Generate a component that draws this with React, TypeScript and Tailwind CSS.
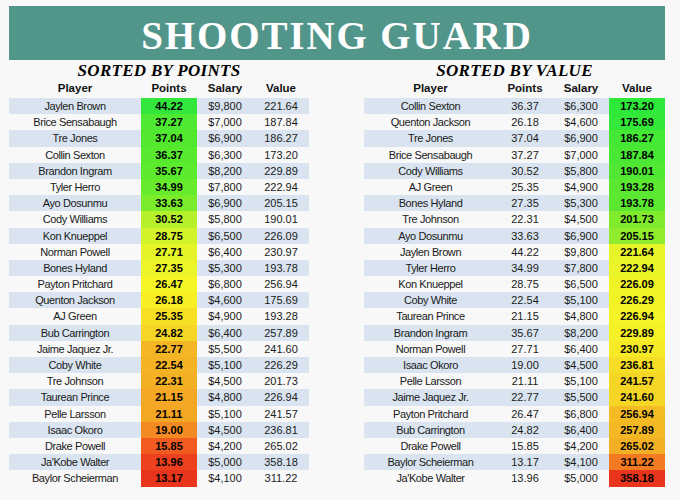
import React from 'react';

type Row = { name: string; points: string; salary: string; value: string; hl: string };

// Sorted by points: the points column carries the colour scale
const byPoints: Row[] = [
  { name: 'Jaylen Brown', points: '44.22', salary: '$9,800', value: '221.64', hl: 'bg-[#33e63c]' },
  { name: 'Brice Sensabaugh', points: '37.27', salary: '$7,000', value: '187.84', hl: 'bg-[#4fe832]' },
  { name: 'Tre Jones', points: '37.04', salary: '$6,900', value: '186.27', hl: 'bg-[#52e830]' },
  { name: 'Collin Sexton', points: '36.37', salary: '$6,300', value: '173.20', hl: 'bg-[#56e92e]' },
  { name: 'Brandon Ingram', points: '35.67', salary: '$8,200', value: '229.89', hl: 'bg-[#5cea2d]' },
  { name: 'Tyler Herro', points: '34.99', salary: '$7,800', value: '222.94', hl: 'bg-[#68eb2c]' },
  { name: 'Ayo Dosunmu', points: '33.63', salary: '$6,900', value: '205.15', hl: 'bg-[#7aec2c]' },
  { name: 'Cody Williams', points: '30.52', salary: '$5,800', value: '190.01', hl: 'bg-[#b6f02a]' },
  { name: 'Kon Knueppel', points: '28.75', salary: '$6,500', value: '226.09', hl: 'bg-[#d4f22a]' },
  { name: 'Norman Powell', points: '27.71', salary: '$6,400', value: '230.97', hl: 'bg-[#e4f428]' },
  { name: 'Bones Hyland', points: '27.35', salary: '$5,300', value: '193.78', hl: 'bg-[#ecf528]' },
  { name: 'Payton Pritchard', points: '26.47', salary: '$6,800', value: '256.94', hl: 'bg-[#f6f526]' },
  { name: 'Quenton Jackson', points: '26.18', salary: '$4,600', value: '175.69', hl: 'bg-[#f8ee24]' },
  { name: 'AJ Green', points: '25.35', salary: '$4,900', value: '193.28', hl: 'bg-[#f7e024]' },
  { name: 'Bub Carrington', points: '24.82', salary: '$6,400', value: '257.89', hl: 'bg-[#f5d525]' },
  { name: 'Jaime Jaquez Jr.', points: '22.77', salary: '$5,500', value: '241.60', hl: 'bg-[#f4b625]' },
  { name: 'Coby White', points: '22.54', salary: '$5,100', value: '226.29', hl: 'bg-[#f4b325]' },
  { name: 'Tre Johnson', points: '22.31', salary: '$4,500', value: '201.73', hl: 'bg-[#f4b025]' },
  { name: 'Taurean Prince', points: '21.15', salary: '$4,800', value: '226.94', hl: 'bg-[#f4a825]' },
  { name: 'Pelle Larsson', points: '21.11', salary: '$5,100', value: '241.57', hl: 'bg-[#f4a725]' },
  { name: 'Isaac Okoro', points: '19.00', salary: '$4,500', value: '236.81', hl: 'bg-[#f48a22]' },
  { name: 'Drake Powell', points: '15.85', salary: '$4,200', value: '265.02', hl: 'bg-[#f15b20]' },
  { name: "Ja'Kobe Walter", points: '13.96', salary: '$5,000', value: '358.18', hl: 'bg-[#ec401e]' },
  { name: 'Baylor Scheierman', points: '13.17', salary: '$4,100', value: '311.22', hl: 'bg-[#e9351c]' },
];

// Sorted by value: the value column carries the colour scale
const byValue: Row[] = [
  { name: 'Collin Sexton', points: '36.37', salary: '$6,300', value: '173.20', hl: 'bg-[#2ee83a]' },
  { name: 'Quenton Jackson', points: '26.18', salary: '$4,600', value: '175.69', hl: 'bg-[#33e838]' },
  { name: 'Tre Jones', points: '37.04', salary: '$6,900', value: '186.27', hl: 'bg-[#45e834]' },
  { name: 'Brice Sensabaugh', points: '37.27', salary: '$7,000', value: '187.84', hl: 'bg-[#48e834]' },
  { name: 'Cody Williams', points: '30.52', salary: '$5,800', value: '190.01', hl: 'bg-[#50e832]' },
  { name: 'AJ Green', points: '25.35', salary: '$4,900', value: '193.28', hl: 'bg-[#5ae830]' },
  { name: 'Bones Hyland', points: '27.35', salary: '$5,300', value: '193.78', hl: 'bg-[#5ce830]' },
  { name: 'Tre Johnson', points: '22.31', salary: '$4,500', value: '201.73', hl: 'bg-[#80ea2c]' },
  { name: 'Ayo Dosunmu', points: '33.63', salary: '$6,900', value: '205.15', hl: 'bg-[#90ec2c]' },
  { name: 'Jaylen Brown', points: '44.22', salary: '$9,800', value: '221.64', hl: 'bg-[#e6f428]' },
  { name: 'Tyler Herro', points: '34.99', salary: '$7,800', value: '222.94', hl: 'bg-[#eaf428]' },
  { name: 'Kon Knueppel', points: '28.75', salary: '$6,500', value: '226.09', hl: 'bg-[#f0f426]' },
  { name: 'Coby White', points: '22.54', salary: '$5,100', value: '226.29', hl: 'bg-[#f2f426]' },
  { name: 'Taurean Prince', points: '21.15', salary: '$4,800', value: '226.94', hl: 'bg-[#f4f426]' },
  { name: 'Brandon Ingram', points: '35.67', salary: '$8,200', value: '229.89', hl: 'bg-[#f6f026]' },
  { name: 'Norman Powell', points: '27.71', salary: '$6,400', value: '230.97', hl: 'bg-[#f6ea26]' },
  { name: 'Isaac Okoro', points: '19.00', salary: '$4,500', value: '236.81', hl: 'bg-[#f5de25]' },
  { name: 'Pelle Larsson', points: '21.11', salary: '$5,100', value: '241.57', hl: 'bg-[#f5d625]' },
  { name: 'Jaime Jaquez Jr.', points: '22.77', salary: '$5,500', value: '241.60', hl: 'bg-[#f5d625]' },
  { name: 'Payton Pritchard', points: '26.47', salary: '$6,800', value: '256.94', hl: 'bg-[#f4bb25]' },
  { name: 'Bub Carrington', points: '24.82', salary: '$6,400', value: '257.89', hl: 'bg-[#f4b825]' },
  { name: 'Drake Powell', points: '15.85', salary: '$4,200', value: '265.02', hl: 'bg-[#f4b024]' },
  { name: 'Baylor Scheierman', points: '13.17', salary: '$4,100', value: '311.22', hl: 'bg-[#f27a22]' },
  { name: "Ja'Kobe Walter", points: '13.96', salary: '$5,000', value: '358.18', hl: 'bg-[#e9351c]' },
];

const SortedTable: React.FC<{ title: string; rows: Row[]; scale: 'points' | 'value'; cols: string; width: string }> = ({
  title,
  rows,
  scale,
  cols,
  width,
}) => (
  <div className={`${width} flex flex-col`}>
    {/* Section title */}
    <div className="h-[20px] flex items-end justify-center pb-[1px] font-['Liberation_Serif',serif] font-bold italic text-[17px] leading-none tracking-[0.3px] text-black">
      {title}
    </div>

    {/* Column headers */}
    <div className={`grid ${cols} h-[18px] items-center text-center font-['Liberation_Sans',Arial,sans-serif] font-bold text-[11.5px] text-[#111]`}>
      <span>Player</span>
      <span>Points</span>
      <span>Salary</span>
      <span>Value</span>
    </div>

    {/* Data rows */}
    {rows.map((r, i) => (
      <div
        key={r.name}
        className={`grid ${cols} h-[16.2px] items-stretch text-center font-['Liberation_Sans',Arial,sans-serif] text-[11px] text-[#1a1a1a] ${
          i % 2 === 0 ? 'bg-[#d9e4f0]' : 'bg-transparent'
        }`}
      >
        <span className="flex items-center justify-center tracking-[-0.4px]">{r.name}</span>
        <span className={`flex items-center justify-center ${scale === 'points' ? `${r.hl} font-bold text-black` : ''}`}>
          {r.points}
        </span>
        <span className="flex items-center justify-center">{r.salary}</span>
        <span className={`flex items-center justify-center ${scale === 'value' ? `${r.hl} font-bold text-black` : ''}`}>
          {r.value}
        </span>
      </div>
    ))}
  </div>
);

export default function App() {
  return (
    <div className="w-[680px] h-[500px] bg-[#f8f8f8] pt-[6px] pl-[9px] overflow-hidden">
      <div className="w-[656px]">
        {/* Title band */}
        <div className="h-[54px] bg-[#52958a] flex items-center justify-center pt-[4px]">
          <h1 className="font-['Liberation_Serif',serif] font-bold text-[39px] leading-none tracking-[1.9px] text-white">
            SHOOTING GUARD
          </h1>
        </div>

        <div className="flex justify-between">
          <SortedTable
            title="SORTED BY POINTS"
            rows={byPoints}
            scale="points"
            cols="grid-cols-[132px_56px_56px_56px]"
            width="w-[300px]"
          />
          <SortedTable
            title="SORTED BY VALUE"
            rows={byValue}
            scale="value"
            cols="grid-cols-[133px_56px_56px_56px]"
            width="w-[301px]"
          />
        </div>
      </div>
    </div>
  );
}
